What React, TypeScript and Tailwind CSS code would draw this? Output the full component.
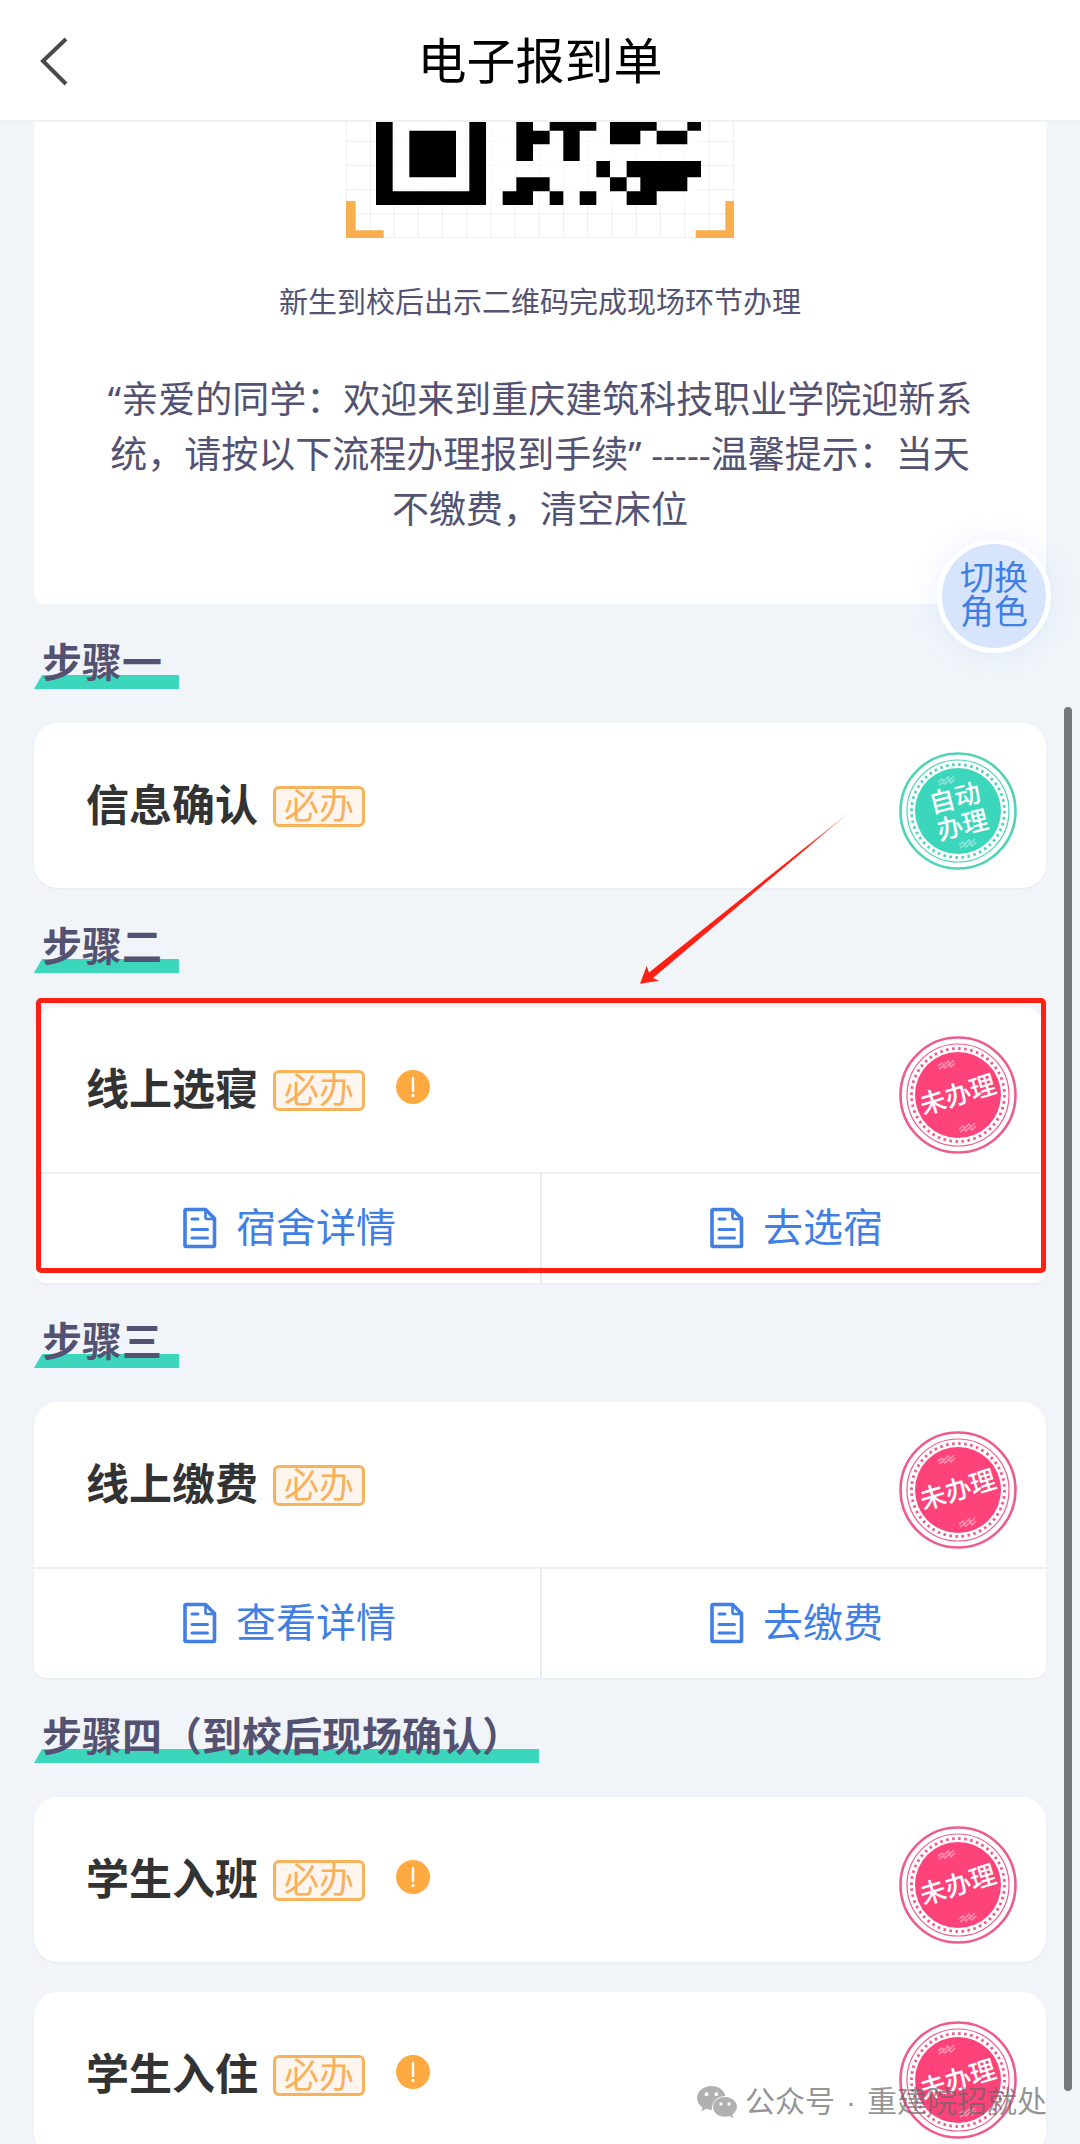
import type { ReactNode } from "react";

type Status = "auto" | "pending";

const GRID_X = [78, 150, 221, 293, 366, 439, 512, 584, 657, 730, 802, 875, 948, 1020, 1093, 1166, 1239];
const GRID_Y = [93, 165, 238, 311, 382];

function QrCode() {
  return (
    <svg viewBox="77 35 1164 348" className="block h-[116px] w-[388px]" role="img" aria-label="二维码">
      <g stroke="#eeeef0" strokeWidth="3">
        {GRID_X.map((x) => (
          <line key={x} x1={x} x2={x} y1="30" y2="383" />
        ))}
        {GRID_Y.map((y) => (
          <line key={y} x1="77" x2="1241" y1={y} y2={y} />
        ))}
      </g>
      <path fill="#fff" d="M167 30H1142V284H167z" fillOpacity="0.6" />
      <path
        fill="#000"
        d="M167 30H217V243H447V30H497V284H167zM267 61H407V201H267zM588 30H638V61H688V102H638V152H588zM688 30H828V61H778V152H729V61H688zM869 30H1009V61H960V102H869zM1009 61H1101V102H1009zM1101 30H1142V61H1101zM828 152H869V201H828zM919 152H1142V201H1101V243H1009V284H919V243H960V201H919zM869 201H919V243H869zM588 201H688V243H638V284H547V243H588zM688 243H729V284H688zM778 243H828V284H778z"
      />
      <path fill="#fbae4e" d="M77 272H106V360H190V383H77zM1241 272H1215V360H1126V383H1241z" />
    </svg>
  );
}

function Stamp({ status }: { status: Status }) {
  const auto = status === "auto";
  const fill = auto ? "#3bd6bb" : "#fe437b";
  const line = auto ? "#4fd3b7" : "#ee5c8c";
  return (
    <svg
      viewBox="-59 -59 118 118"
      className="block size-[118px] shrink-0"
      role="img"
      aria-label={auto ? "自动办理" : "未办理"}
    >
      <circle r="57.5" fill="#fff" stroke={line} strokeWidth="2.6" />
      <circle r="51" fill="none" stroke={line} strokeWidth="1.2" />
      <circle r="46.5" fill="none" stroke={line} strokeWidth="2.8" strokeDasharray="2.6 3.48" />
      <circle r="43" fill={fill} />
      <g fill="none" stroke="#fff" strokeOpacity="0.4" strokeWidth="1.6">
        <path d="M-20 -29l4 -3 2 2 4 -4 2 3 4 -4M-19 -26l4 -3 2 2 4 -4 2 3 4 -4" />
        <path d="M1 34l4 -3 2 2 4 -4 2 3 4 -4M2 37l4 -3 2 2 4 -4 2 3 4 -4" />
      </g>
      <g fill="#fff" textAnchor="middle" fontWeight="500" fontSize="26">
        {auto ? (
          <g transform="rotate(-14)">
            <text y="-4">自动</text>
            <text x="1" y="24">办理</text>
          </g>
        ) : (
          <text y="9" transform="rotate(-17)">未办理</text>
        )}
      </g>
    </svg>
  );
}

function DocIcon() {
  return (
    <svg
      viewBox="0 0 44 44"
      className="size-11"
      fill="none"
      stroke="currentColor"
      strokeWidth="3.6"
      strokeLinejoin="round"
      strokeLinecap="round"
      aria-hidden="true"
    >
      <path d="M8 3.5H27.500L36.500 12.500V39.500a1 1 0 0 1 -1 1H8a1 1 0 0 1 -1 -1V4.500a1 1 0 0 1 1 -1z" />
      <path d="M27.500 4V11.500a1.500 1.500 0 0 0 1.500 1.500H36" strokeWidth="2.600" />
      <path d="M14 13H20M14 23.500H29.500M14 32H29.500" strokeWidth="3" />
    </svg>
  );
}

function InfoIcon() {
  return (
    <svg viewBox="0 0 34 34" className="block size-[34px]" aria-hidden="true">
      <circle cx="17" cy="17" r="17" fill="#ffa941" />
      <path d="M17 8V21" stroke="#fff" strokeWidth="2.400" strokeLinecap="round" />
      <circle cx="17" cy="25.500" r="1.600" fill="#fff" />
    </svg>
  );
}

function StepHeading({ children }: { children: ReactNode }) {
  return (
    <div className="mt-[33px] mb-[34px] flex">
      <h2 className="relative isolate pr-[17px] pl-2 text-[40px] leading-[52px] font-bold text-[#545272]">
        <span className="absolute right-0 bottom-0 left-2 -z-10 h-3.5 bg-[#3bd6bb]" />
        <svg viewBox="0 0 9 14" className="absolute bottom-0 left-0 -z-10 h-3.5 w-[9px]" aria-hidden="true">
          <path d="M9 0V14H0L8 0z" fill="#3bd6bb" />
        </svg>
        {children}
      </h2>
    </div>
  );
}

function TaskCard({
  title,
  status,
  info = false,
  actions,
  children,
}: {
  title: string;
  status: Status;
  info?: boolean;
  actions?: string[];
  children?: ReactNode;
}) {
  const shape = actions ? "rounded-t-[24px] rounded-b-[12px]" : "rounded-[24px]";
  return (
    <section className={`relative bg-white shadow-[0_1px_2px_rgba(90,100,130,0.08)] ${shape}`}>
      <div className="flex items-center justify-between pt-[29px] pr-[29px] pb-[18px] pl-[52px]">
        <div className="flex items-center gap-[15px] pb-[10px]">
          <h3 className="text-[43px] leading-[60px] font-bold text-[#333]">{title}</h3>
          <div className="flex items-start gap-[31px]">
            <span className="rounded-[6px] border-[3px] border-[#f7b35c] bg-[#fef5ee] px-2 text-[35px] leading-[35px] text-[#f9b05a]">
              必办
            </span>
            {info && (
              <button type="button" aria-label="说明">
                <InfoIcon />
              </button>
            )}
          </div>
        </div>
        <Stamp status={status} />
      </div>
      {actions && (
        <div className="grid grid-cols-2 border-t-2 border-[#eef0f2]">
          {actions.map((label) => (
            <button
              key={label}
              type="button"
              className="flex h-[109px] items-center justify-center gap-[14px] border-[#e9ebf0] pb-0.5 text-[40px] leading-[56px] text-[#417fe4] last:border-l-2"
            >
              <DocIcon />
              {label}
            </button>
          ))}
        </div>
      )}
      {children}
    </section>
  );
}

function Highlight() {
  return (
    <>
      <div className="pointer-events-none absolute top-[-9px] right-0 bottom-[10px] left-[2px] rounded-[5px] border-[5px] border-[#ff2013]" />
      <svg
        viewBox="110 95 640 525"
        className="pointer-events-none absolute top-[-195px] left-[603px] h-[175px] w-[213px]"
        aria-hidden="true"
      >
        <defs>
          <linearGradient id="arrow" x1="1" y1="0" x2="0" y2="1">
            <stop offset="0" stopColor="#ff2013" stopOpacity="0.2" />
            <stop offset="0.2" stopColor="#ff2013" />
          </linearGradient>
        </defs>
        <path d="M742 101L158 593L176 602L119 611L139 557L146 577L738 103z" fill="url(#arrow)" />
      </svg>
    </>
  );
}

function Watermark() {
  return (
    <div className="pointer-events-none absolute right-[33px] bottom-[22px] flex items-center gap-2 text-[30px] leading-10 text-[#666]/70">
      <svg viewBox="0 0 122 98" className="h-8 w-10" aria-hidden="true">
        <path
          fill="#b0b0b0"
          fillRule="evenodd"
          d="M44 0C20 0 0 16 0 37c0 12 6 22 17 29l-5 12 16-8c6 2 11 3 18 3C43 50 62 31 87 31 83 12 65 0 44 0zM29 19a6 6 0 1 1 0 12a6 6 0 1 1 0-12zM59 19a6 6 0 1 1 0 12a6 6 0 1 1 0-12z"
        />
        <path
          fill="#b0b0b0"
          fillRule="evenodd"
          d="M85 34c-20 0-36 13-36 30s16 30 36 30c5 0 9-1 13-2l13 6-3-11c8-6 14-14 14-23 0-17-17-30-37-30zM73 50a5 5 0 1 1 0 10a5 5 0 1 1 0-10zM98 50a5 5 0 1 1 0 10a5 5 0 1 1 0-10z"
        />
      </svg>
      <div className="flex gap-[11px]">
        <span>公众号</span>
        <span>·</span>
        <span>重建院招就处</span>
      </div>
    </div>
  );
}

export default function App() {
  return (
    <div className="relative flex h-screen flex-col overflow-hidden bg-[#f1f5fa] font-['Liberation_Sans','Noto_Sans_CJK_SC',sans-serif]">
      <header className="grid shrink-0 grid-cols-[120px_1fr_120px] items-center border-b-2 border-[#eef0f2] bg-white pt-8 pb-7">
        <button type="button" aria-label="返回" className="pl-[38px]">
          <svg
            viewBox="0 0 32 52"
            className="block h-[52px] w-8"
            fill="none"
            stroke="#4a4a4a"
            strokeWidth="4"
            aria-hidden="true"
          >
            <path d="M28 3L5 25L28 48" />
          </svg>
        </button>
        <h1 className="text-center text-[49px] leading-[60px] text-black">电子报到单</h1>
      </header>

      <main className="min-h-0 flex-1 overflow-y-auto px-[34px] [scrollbar-width:none]">
        <section className="flex flex-col items-center rounded-b-[12px] bg-white px-[62px] pb-[68px]">
          <QrCode />
          <p className="mt-[45px] text-[29px] leading-10 text-[#545272]">新生到校后出示二维码完成现场环节办理</p>
          <p className="mt-12 text-center font-['Noto_Sans','Noto_Sans_CJK_SC',sans-serif] text-[37px] leading-[55px] text-[#545272]">
            “亲爱的同学：欢迎来到重庆建筑科技职业学院迎新系统，请按以下流程办理报到手续” -----温馨提示：当天不缴费，清空床位
          </p>
        </section>

        <StepHeading>步骤一</StepHeading>
        <TaskCard title="信息确认" status="auto" />

        <StepHeading>步骤二</StepHeading>
        <TaskCard title="线上选寝" status="pending" info actions={["宿舍详情", "去选宿"]}>
          <Highlight />
        </TaskCard>

        <StepHeading>步骤三</StepHeading>
        <TaskCard title="线上缴费" status="pending" actions={["查看详情", "去缴费"]} />

        <StepHeading>步骤四（到校后现场确认）</StepHeading>
        <div className="flex flex-col gap-[30px]">
          <TaskCard title="学生入班" status="pending" info />
          <TaskCard title="学生入住" status="pending" info />
        </div>
      </main>

      <div className="absolute top-[707px] right-2 bottom-[53px] w-2 rounded-full bg-[#75797e]" />
      <button
        type="button"
        className="absolute top-[539px] right-[29px] size-[114px] rounded-full border-[5px] border-white bg-[#d7e5fc] pb-0.5 text-[34px] leading-[34px] text-[#417fe4] shadow-[0_0_30px_rgba(80,130,230,0.12)]"
      >
        切换
        <br />
        角色
      </button>
      <Watermark />
    </div>
  );
}
